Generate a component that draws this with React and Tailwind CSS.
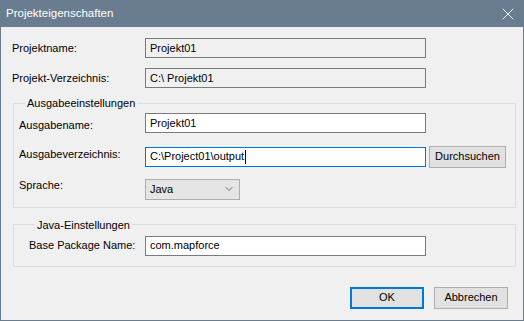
import { X, ChevronDown } from 'lucide-react';

const font = { fontFamily: '"Liberation Sans", Arial, sans-serif' };

function Field({ value, readOnly, focused, className = 'w-[281px]' }) {
  return (
    <div
      className={`h-[20px] shrink-0 flex items-center pl-[4px] border text-[11px] text-black ${className} ${
        readOnly ? 'bg-[#f0f0f0] border-[#7a7a7a]' : focused ? 'bg-white border-[#0078d7]' : 'bg-white border-[#7a7a7a]'
      }`}
    >
      {value}
      {focused && <span className="inline-block w-px h-[14px] bg-black ml-px" />}
    </div>
  );
}

export default function App() {
  return (
    <div style={font} className="w-[524px] h-[321px] flex flex-col bg-[#6a7c8f] text-[11px] text-black">
      {/* Titelleiste */}
      <div className="h-[27px] shrink-0 flex items-center justify-between pl-[6px] pr-[6px] text-white text-[11.5px]">
        <span>Projekteigenschaften</span>
        <X size={20} strokeWidth={1.1} className="text-white" />
      </div>

      <div className="flex-1 mx-px mb-px bg-[#f0f0f0] pt-[11px] pl-[11px] pr-[7px]">
        <div className="flex items-center">
          <span className="w-[133px] shrink-0 whitespace-nowrap">Projektname:</span>
          <Field value="Projekt01" readOnly />
        </div>
        <div className="flex items-center mt-[10px]">
          <span className="w-[133px] shrink-0 whitespace-nowrap">Projekt-Verzeichnis:</span>
          <Field value="C:\ Projekt01" readOnly />
        </div>

        {/* Ausgabeeinstellungen */}
        <fieldset className="mt-[8px] ml-px w-[503px] border border-[#dcdcdc] pl-[5px] pt-[3px] pb-[7px]">
          <legend className="ml-[6px] px-[2px] leading-[14px]">Ausgabeeinstellungen</legend>
          <div className="flex items-center">
            <span className="w-[126px] shrink-0 whitespace-nowrap mt-[4px]">Ausgabename:</span>
            <Field value="Projekt01" />
          </div>
          <div className="flex items-center mt-[12px]">
            <span className="w-[126px] shrink-0 whitespace-nowrap -mt-[4px]">Ausgabeverzeichnis:</span>
            <Field value="C:\Project01\output" focused />
            <button className="ml-[3px] w-[77px] h-[22px] shrink-0 bg-[#e1e1e1] border border-[#adadad] text-[11px]">
              Durchsuchen
            </button>
          </div>
          <div className="flex items-center mt-[11px]">
            <span className="w-[126px] shrink-0 whitespace-nowrap -mt-[8px]">Sprache:</span>
            <div className="w-[95px] h-[21px] flex items-center justify-between pl-[4px] pr-[4px] bg-[#e5e5e5] border border-[#adadad]">
              <span>Java</span>
              <ChevronDown size={12} strokeWidth={1.5} className="text-[#444]" />
            </div>
          </div>
        </fieldset>

        {/* Java-Einstellungen */}
        <fieldset className="mt-[10px] ml-px w-[503px] border border-[#dcdcdc] pl-[15px] pt-[4px] pb-[10px]">
          <legend className="ml-[6px] px-[2px] leading-[14px]">Java-Einstellungen</legend>
          <div className="flex items-center">
            <span className="w-[116px] shrink-0 whitespace-nowrap">Base Package Name:</span>
            <Field value="com.mapforce" />
          </div>
        </fieldset>

        <div className="flex justify-end gap-[10px] mt-[20px] pr-[8px]">
          <button className="w-[74px] h-[22px] bg-[#e1e1e1] border-2 border-[#0078d7] text-[11px]">OK</button>
          <button className="w-[74px] h-[22px] bg-[#e1e1e1] border border-[#adadad] text-[11px]">Abbrechen</button>
        </div>
      </div>
    </div>
  );
}
